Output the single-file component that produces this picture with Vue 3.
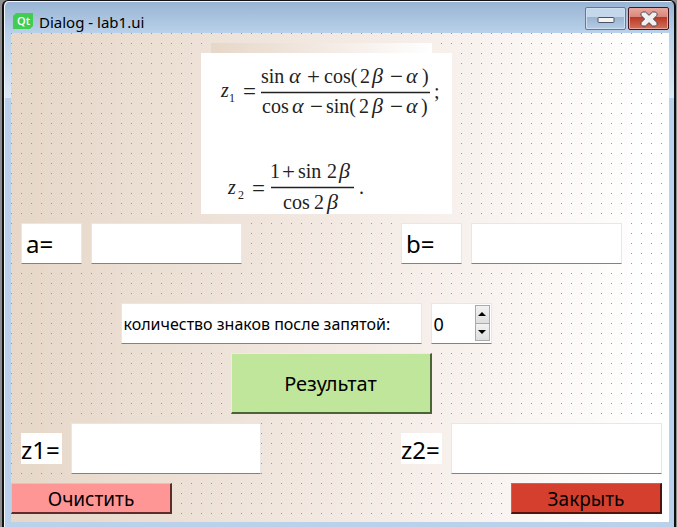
<script setup>
import { ref } from 'vue'

const a = ref('')
const b = ref('')
const z1 = ref('')
const z2 = ref('')
const digits = ref(0)

function calculate() {
  const x = Number(a.value)
  const y = Number(b.value)
  const first = (Math.sin(x) + Math.cos(2 * y - x)) / (Math.cos(x) - Math.sin(2 * y - x))
  const second = (1 + Math.sin(2 * y)) / Math.cos(2 * y)
  z1.value = first.toFixed(digits.value)
  z2.value = second.toFixed(digits.value)
}

function clearAll() {
  a.value = b.value = z1.value = z2.value = ''
}

function step(delta) {
  digits.value = Math.min(20, Math.max(0, Number(digits.value) + delta))
}
</script>

<template>
  <div class="window">
    <header class="titlebar">
      <svg class="logo" width="20" height="16" viewBox="0 0 20 16">
        <path d="M3 0H20V13L17 16H0V3Z" fill="#41cd52" />
        <text x="4" y="12" class="logo-text">Qt</text>
      </svg>
      <h1 class="title">Dialog - lab1.ui</h1>
      <button class="win-btn minimize" type="button" aria-label="Minimize">
        <svg width="18" height="8" viewBox="0 0 18 8">
          <rect x="1" y="1.5" width="16" height="5" rx="1" fill="#f4f4f4" stroke="#4a5366" />
        </svg>
      </button>
      <button class="win-btn close" type="button" aria-label="Close">
        <svg width="18" height="16" viewBox="0 0 18 16">
          <path
            d="M2.500 1H5.500L9 4.300L12.500 1H15.500L17 2.500V4.500L13.300 8L17 11.500V13.500L15.500 15H12.500L9 11.700L5.500 15H2.500L1 13.500V11.500L4.700 8L1 4.500V2.500Z"
            fill="#f0f0f0" stroke="#4c4757" stroke-linejoin="round"
          />
        </svg>
      </button>
    </header>

    <main class="canvas">
      <div class="strip"></div>
      <div class="formula">
        <svg width="251" height="161" viewBox="0 0 251 161">
          <g class="math">
            <text x="20" y="44" class="it">z</text>
            <text x="28" y="49" class="sub">1</text>
            <text x="42" y="46" class="op">=</text>
            <text x="60" y="30">sin</text>
            <text x="88" y="30" class="it gr">α</text>
            <text x="106" y="31" class="op">+</text>
            <text x="123" y="30">cos(</text>
            <text x="159" y="30">2</text>
            <text x="171" y="30" class="it gr">β</text>
            <text x="189" y="31" class="op">−</text>
            <text x="205" y="30" class="it gr">α</text>
            <text x="221" y="30">)</text>
            <text x="233" y="45">;</text>
            <text x="61" y="60">cos</text>
            <text x="91" y="60" class="it gr">α</text>
            <text x="109" y="61" class="op">−</text>
            <text x="125" y="60">sin(</text>
            <text x="158" y="60">2</text>
            <text x="171" y="60" class="it gr">β</text>
            <text x="189" y="61" class="op">−</text>
            <text x="205" y="60" class="it gr">α</text>
            <text x="220" y="60">)</text>
            <text x="27" y="141" class="it">z</text>
            <text x="37" y="146" class="sub">2</text>
            <text x="51" y="143" class="op">=</text>
            <text x="69" y="125">1</text>
            <text x="81" y="126" class="op">+</text>
            <text x="97" y="125">sin</text>
            <text x="126" y="125">2</text>
            <text x="138" y="125" class="it gr">β</text>
            <text x="158" y="141">.</text>
            <text x="82" y="156">cos</text>
            <text x="113" y="156">2</text>
            <text x="126" y="156" class="it gr">β</text>
          </g>
          <path d="M60 39.5H229M70 134.5H153" stroke="#222" stroke-width="1.4" />
        </svg>
      </div>

      <form class="form" @submit.prevent="calculate">
        <div class="pair">
          <div class="cell">
            <label class="box tag" for="a">a=</label>
            <input id="a" v-model="a" class="box entry" type="text" />
          </div>
          <div class="cell">
            <label class="box tag" for="b">b=</label>
            <input id="b" v-model="b" class="box entry" type="text" />
          </div>
        </div>

        <div class="precision">
          <label class="box caption" for="digits">количество знаков после запятой:</label>
          <div class="box spin">
            <input id="digits" v-model="digits" class="spin-value" type="text" inputmode="numeric" />
            <div class="spin-buttons">
              <button type="button" aria-label="Increase" @click="step(1)">
                <svg width="8" height="4" viewBox="0 0 8 4"><path d="M0 4L4 0L8 4Z" /></svg>
              </button>
              <button type="button" aria-label="Decrease" @click="step(-1)">
                <svg width="8" height="4" viewBox="0 0 8 4"><path d="M0 0L4 4L8 0Z" /></svg>
              </button>
            </div>
          </div>
        </div>

        <button class="push result" type="submit">Результат</button>

        <div class="pair">
          <div class="cell">
            <label class="plain" for="z1">z1=</label>
            <input id="z1" v-model="z1" class="box output first" type="text" readonly />
          </div>
          <div class="cell">
            <label class="plain" for="z2">z2=</label>
            <input id="z2" v-model="z2" class="box output" type="text" readonly />
          </div>
        </div>

        <div class="actions">
          <button class="push clear" type="button" @click="clearAll">Очистить</button>
          <button class="push exit" type="button">Закрыть</button>
        </div>
      </form>
    </main>
  </div>
</template>

<style>
body {
  margin: 0;
  background: #8e8e8e;
}
</style>

<style scoped>
* {
  box-sizing: border-box;
}

.window {
  min-height: 100vh;
  margin: 0 1px 0 2px;
  padding: 0 5px 5px 7px;
  display: flex;
  flex-direction: column;
  border: solid #111;
  border-width: 1px 2px 0;
  border-radius: 6px 6px 0 0;
  box-shadow: inset 1px 1px 0 #f2f7fc;
  background: linear-gradient(#98b3d2 0, #b9d1ea 32px, #dce8f5 97px, #b9d1ea 97px);
  font-family: "Noto Sans", "Open Sans", sans-serif;
  color: #000;
}

.titlebar {
  height: 32px;
  display: flex;
  align-items: flex-start;
  padding-top: 6px;
}

.logo {
  margin: 6px 6px 0 2px;
}

.logo-text {
  font: 600 11px "Open Sans", sans-serif;
  fill: #fff;
}

.title {
  margin: 5px auto 0 0;
  font-size: 15px;
  line-height: 20px;
  font-weight: 400;
}

.win-btn {
  height: 23px;
  width: 41px;
  padding: 0;
  display: flex;
  align-items: center;
  justify-content: center;
  border-radius: 2px;
}

.minimize {
  margin-right: 2px;
  padding-top: 3px;
  border: 1px solid #66798f;
  background: linear-gradient(#c5d7ea 0 45%, #9cb4d0 45%, #b4cde6);
  box-shadow: inset 0 0 0 1px #cfdff0;
}

.close {
  border: 1px solid #431620;
  background: linear-gradient(#e8a89e, #d98478 45%, #b73a25 45%, #d3705c);
  box-shadow: inset 0 0 0 1px #e9a79c;
}

.canvas {
  flex: 1;
  display: flex;
  flex-direction: column;
  padding: 10px 0 8px;
  background:
    conic-gradient(from 270deg at 1px 1px, #a0968e 90deg, transparent 0) 0 0 / 10px 10px,
    linear-gradient(90deg, #e6d7c8, #f5ede8 60%, #fff 97%);
}

.strip {
  width: 221px;
  height: 10px;
  align-self: center;
  margin-right: 38px;
  background: linear-gradient(90deg, #e6d7c8, #f5ede8 60%, #fff);
}

.formula {
  align-self: center;
  margin-right: 28px;
  height: 161px;
  background: #fff;
}

.formula svg {
  display: block;
}

.math {
  font: 20px "Liberation Serif", serif;
  fill: #222;
}

.it {
  font-style: italic;
}

.gr {
  font-size: 22px;
}

.op {
  font-size: 23px;
}

.sub {
  font-size: 12px;
}

.form {
  display: flex;
  flex-direction: column;
  padding-top: 9px;
}

.pair {
  display: grid;
  grid-template-columns: minmax(0, 380fr) minmax(0, 261fr);
  padding: 0 7px 0 10px;
}

.cell {
  display: flex;
  align-items: center;
  gap: 9px;
}

.box {
  height: 41px;
  margin: 0;
  padding: 0 4px;
  border: 1px solid #e9e7e5;
  border-bottom-color: #828282;
  border-radius: 0;
  background: #fff;
  font-family: inherit;
  font-size: 24px;
  line-height: 39px;
  outline: none;
}

.tag {
  flex: 0 0 61px;
}

.entry {
  flex: 0 1 151px;
  min-width: 0;
}

.precision {
  display: flex;
  justify-content: center;
  gap: 9px;
  margin: 39px 68px 9px 0;
}

.caption {
  flex: 0 1 301px;
  padding: 0 2px;
  font-size: 16px;
  line-height: 41px;
  white-space: nowrap;
}

.spin {
  flex: 0 0 61px;
  display: flex;
  padding: 1px 1px 2px 2px;
}

.spin-value {
  flex: 1;
  width: 0;
  min-width: 0;
  padding: 2px 0 0;
  border: 0;
  outline: none;
  background: none;
  font: 18px "Noto Sans", sans-serif;
}

.spin-buttons {
  width: 15px;
  display: flex;
  flex-direction: column;
}

.spin-buttons button {
  flex: 1;
  padding: 0;
  display: flex;
  align-items: center;
  justify-content: center;
  border: 1px solid #aaa;
  background: linear-gradient(#f2f2f2, #dedede);
}

.spin-buttons button + button {
  border-top: 0;
}

.push {
  height: 31px;
  padding: 2px 0 0;
  border: solid;
  border-width: 1px 2px 2px 1px;
  font-family: inherit;
  font-size: 19px;
  line-height: 26px;
  color: #000;
}

.result {
  align-self: center;
  width: 201px;
  height: 61px;
  margin: 0 18px 9px 0;
  background: #c0e69c;
  border-color: #d9ffb8 #4b6336 #4b6336 #d9ffb8;
  font-size: 20px;
}

.plain {
  flex: 0 0 41px;
  height: 31px;
  background: #fff;
  font-size: 24px;
  line-height: 33px;
}

.output {
  flex: 1;
  min-width: 0;
  height: 51px;
}

.first {
  flex: 0 1 190px;
}

.actions {
  display: flex;
  justify-content: space-between;
  padding-right: 7px;
  margin-top: 9px;
}

.clear {
  width: 161px;
  background: #ff9696;
  border-color: #ffb4b4 #5e2c2c #5e2c2c #ffb4b4;
}

.exit {
  width: 151px;
  background: #d5402e;
  border-color: #f0563f #4f140c #4f140c #f0563f;
}
</style>
